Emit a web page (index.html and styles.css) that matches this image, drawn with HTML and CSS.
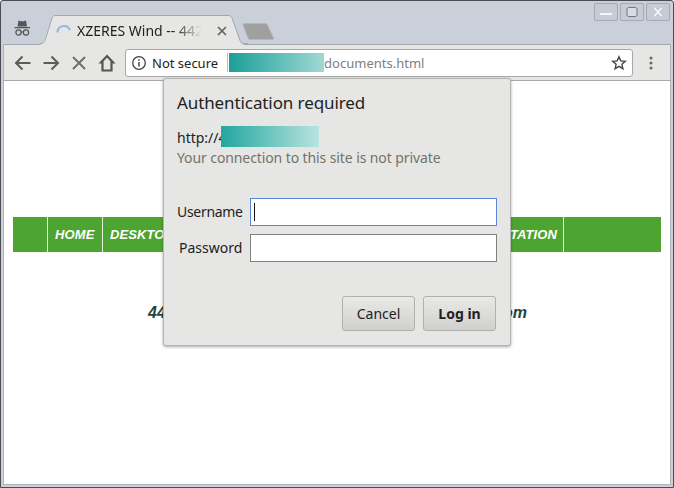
FILE: index.html
```html
<!DOCTYPE html>
<html lang="en">
<head>
<meta charset="utf-8">
<title>XZERES Wind</title>
<link rel="stylesheet" href="styles.css">
</head>
<body>
<div class="window">
  <div class="winbtns">
    <span class="winbtn"><svg width="18" height="14" viewBox="0 0 18 14"><path d="M3 9h12" class="wb"/></svg></span>
    <span class="winbtn"><svg width="18" height="14" viewBox="0 0 18 14"><rect x="4" y="2.500" width="10" height="9" rx="1.500" class="wb-thin"/></svg></span>
    <span class="winbtn"><svg width="18" height="14" viewBox="0 0 18 14"><path d="M5 2.500l8 9M13 2.500l-8 9" class="wb"/></svg></span>
  </div>
  <header class="tabstrip">
    <svg class="incognito" width="18" height="18" viewBox="0 0 18 18">
      <path d="M0.500 8h15.500v1.300H0.500z M3.500 7.500L4.500 1.500l2.300.7h2.900l2.300-.7 1 6z" fill="#555"/>
      <circle cx="4.500" cy="13.500" r="2.600" fill="none" stroke="#555" stroke-width="1.200"/>
      <circle cx="12" cy="13.500" r="2.600" fill="none" stroke="#555" stroke-width="1.200"/>
      <path d="M7 13h2.500" stroke="#555" stroke-width="1.100"/>
    </svg>
    <div class="tab">
      <svg class="tabshape" width="208" height="31" viewBox="0 0 208 31">
        <path d="M0 31V29.500c2 0 3-1 4-3L12 3c.7-1.700 2-2.500 4-2.500h172c2 0 3.300.8 4 2.500l8 23.500c1 2 2 3 4 3V31z" fill="#e6e6e4"/>
        <path d="M0 28.500h1c2 0 3-1 4-3L12 3c.7-1.700 2-2.500 4-2.500h172c2 0 3.300.8 4 2.500l8 22.500c1 2 2 3 4 3h4" fill="none" stroke="#a3a8ad"/>
      </svg>
      <svg class="spinner" width="16" height="16" viewBox="0 0 16 16"><path d="M1.500 9.500A6.500 6.500 0 0 1 14 7" fill="none" stroke="#8fb4e8" stroke-width="2"/></svg>
      <span class="tabtitle">XZERES Wind -- 442</span>
      <svg class="tabclose" width="10" height="10" viewBox="0 0 10 10"><path d="M1 1l8 8M9 1L1 9" stroke="#5f5f5f" stroke-width="1.600"/></svg>
    </div>
    <svg class="newtab" width="36" height="20" viewBox="0 0 36 20"><path d="M2 3c0-1 .5-1.500 1.500-1.500h21c1 0 1.500.4 2 1.500l6 13c.4 1 0 1.500-1 1.500H9c-1 0-1.600-.5-2-1.500z" fill="#a0a0a0" stroke="#b4b8bc"/></svg>
  </header>
  <nav class="toolbar">
    <svg class="tool" width="20" height="20" viewBox="0 0 20 20"><path d="M17.500 10H3M9.500 3.500L3 10l6.500 6.500" class="ti"/></svg>
    <svg class="tool" width="20" height="20" viewBox="0 0 20 20"><path d="M2.500 10H17M10.500 3.500L17 10l-6.500 6.500" class="ti"/></svg>
    <svg class="tool" width="20" height="20" viewBox="0 0 20 20"><path d="M4 4l12 12M16 4L4 16" class="ti ti-light"/></svg>
    <svg class="tool" width="20" height="20" viewBox="0 0 20 20"><path d="M10 3L16 9.500h-1.500v8h-9v-8H4z" class="ti ti-home"/></svg>
    <div class="omnibox">
      <svg class="info" width="16" height="16" viewBox="0 0 16 16"><circle cx="8" cy="8" r="6.300" fill="none" stroke="#444" stroke-width="1.300"/><path d="M8 7v4.500M8 4.300v1.500" stroke="#444" stroke-width="1.500"/></svg>
      <span class="secure">Not secure</span>
      <span class="omnisep"></span>
      <span class="redact-url"></span>
      <span class="urltext">documents.html</span>
      <svg class="star" width="16" height="16" viewBox="0 0 16 16"><path d="M8 1.800l1.800 4.100 4.500.4-3.400 3 1 4.400L8 11.400l-3.900 2.300 1-4.400-3.400-3 4.500-.4z" fill="none" stroke="#444" stroke-width="1.400"/></svg>
    </div>
    <svg class="menu" width="4" height="14" viewBox="0 0 4 14"><circle cx="2" cy="2" r="1.500" fill="#666"/><circle cx="2" cy="7" r="1.500" fill="#666"/><circle cx="2" cy="12" r="1.500" fill="#666"/></svg>
  </nav>
  <main class="content">
    <ul class="mainnav">
      <li class="cell cell-empty"></li>
      <li class="cell cell-home">HOME</li>
      <li class="cell cell-desktop">DESKTOP</li>
      <li class="cell cell-docs">DOCUMENTATION</li>
      <li class="cell-rest"></li>
    </ul>
    <p class="address"><span>44</span><span>om</span></p>
  </main>
  <section class="dialog">
    <h1 class="dlg-title">Authentication required</h1>
    <div class="dlg-origin">http://4<span class="redact-origin"></span></div>
    <div class="dlg-note">Your connection to this site is not private</div>
    <div class="dlg-form">
      <label class="dlg-label">Username</label>
      <div class="dlg-input dlg-input-focus"><span class="caret"></span></div>
      <label class="dlg-label dlg-label-pw">Password</label>
      <div class="dlg-input"></div>
    </div>
    <div class="dlg-buttons">
      <button class="dlg-btn">Cancel</button>
      <button class="dlg-btn dlg-btn-primary">Log in</button>
    </div>
  </section>
</div>
</body>
</html>
```
FILE: styles.css
```css
* { box-sizing: border-box; }
html, body { margin: 0; padding: 0; }
body { width: 674px; height: 488px; overflow: hidden; font-family: "Noto Sans", sans-serif; }
.window {
  position: relative;
  width: 674px;
  height: 488px;
  background: #c9d0da;
  border: 1px solid #4b4d52;
  border-radius: 3px 3px 0 0;
  padding: 0 2px 2px;
  display: flex;
  flex-direction: column;
}
.winbtns { position: absolute; top: 2px; right: 3px; display: flex; gap: 2px; }
.winbtn {
  width: 24px; height: 18px;
  border: 1px solid #a5abb4;
  border-radius: 2px;
  background: #c5ccd6;
  display: flex; align-items: center; justify-content: center;
}
.wb { stroke: #f4f6f8; stroke-width: 2; fill: none; filter: drop-shadow(0 0 .6px #7d838c); }
.wb-thin { stroke: #70767e; stroke-width: 1; fill: #d9dde3; }
.tabstrip { height: 43px; flex: none; display: flex; align-items: flex-end; position: relative; z-index: 1; }
.incognito { position: absolute; left: 11px; top: 18px; }
.tab { position: absolute; left: 37px; top: 14px; width: 208px; height: 31px; display: flex; align-items: center; }
.tabshape { position: absolute; left: 0; top: 0; }
.spinner { position: relative; margin-left: 16px; }
.tabtitle {
  position: relative;
  margin-left: 5px;
  width: 135px;
  overflow: hidden;
  white-space: nowrap;
  font-size: 14px;
  color: #222;
  -webkit-mask-image: linear-gradient(90deg, #000 72%, transparent 92%);
  mask-image: linear-gradient(90deg, #000 72%, transparent 92%);
}
.tabclose { position: relative; margin-left: 5px; }
.newtab { position: absolute; left: 238px; top: 21px; }
.toolbar {
  height: 37px;
  flex: none;
  background: #e6e6e4;
  border-top: 1px solid #a3a8ad;
  border-bottom: 1px solid #a9a9a9;
  border-left: 1px solid #b0b5bb;
  border-right: 1px solid #b0b5bb;
  display: flex;
  align-items: center;
  padding-left: 9px;
  position: relative;
}
.tool { margin-right: 8px; flex: none; }
.ti { fill: none; stroke: #5c5c5c; stroke-width: 2; }
.ti-light { stroke: #707070; }
.ti-home { stroke: #555; stroke-width: 2.200; stroke-linejoin: miter; }
.omnibox {
  width: 508px;
  height: 28px;
  background: #fff;
  border: 1px solid #a8a8a8;
  border-radius: 3px;
  display: flex;
  align-items: center;
  padding-left: 5px;
  flex: none;
}
.info { flex: none; }
.secure { font-size: 13px; color: #222; margin-left: 5px; white-space: nowrap; }
.omnisep { width: 1px; height: 19px; background: #bbb; margin-left: 9px; flex: none; }
.redact-url { width: 95px; height: 19px; background: linear-gradient(90deg, #1a9f98, #a0d8d4); margin-left: 1px; flex: none; }
.urltext { font-size: 13px; color: #808080; }
.star { margin-left: auto; margin-right: 5px; flex: none; }
.menu { margin-left: 16px; flex: none; }
.content {
  flex: 1;
  background: #fff;
  border: 1px solid #b0b5bb;
  border-top: 0;
  padding: 136px 9px 0;
  overflow: hidden;
}
.mainnav { list-style: none; margin: 0; padding: 0; display: flex; height: 35px; background: #4ea431; }
.cell {
  border-right: 1px solid #e4efe0;
  color: #fff;
  font: italic bold 13px "Liberation Sans", sans-serif;
  letter-spacing: .1px;
  line-height: 35px;
  padding-left: 7px;
  flex: none;
  overflow: hidden;
  white-space: nowrap;
}
.cell-empty { width: 35px; }
.cell-home { width: 55px; }
.cell-desktop { width: 130px; }
.cell-docs { width: 331px; text-align: right; padding-right: 6px; }
.cell-rest { flex: 1; }
.address {
  margin: 51px 0 0 135px;
  width: 379px;
  display: flex;
  justify-content: space-between;
  color: #24453a;
  font: italic bold 16px "Liberation Sans", sans-serif;
  line-height: 20px;
  white-space: nowrap;
}
.dialog {
  position: absolute;
  left: 162px;
  top: 77px;
  width: 348px;
  height: 268px;
  background: #e6e6e4;
  border: 1px solid #b4b4b2;
  border-radius: 3px;
  box-shadow: 0 1px 3px rgba(0,0,0,.35);
  padding: 12px 13px 0;
}
.dlg-title { margin: 0; font-size: 17px; letter-spacing: -.1px; font-weight: 400; line-height: 24px; color: #222; }
.dlg-origin { margin-top: 12px; height: 22px; font-size: 14px; line-height: 22px; color: #222; position: relative; white-space: nowrap; }
.redact-origin { position: absolute; left: 44px; top: -1px; width: 98px; height: 21px; background: linear-gradient(90deg, #22a79f, #b9e3df); }
.dlg-note { font-size: 14px; letter-spacing: -.1px; line-height: 18px; color: #73736a; }
.dlg-form { margin-top: 31px; display: grid; grid-template-columns: 73px 247px; row-gap: 8px; }
.dlg-label { font-size: 14px; letter-spacing: -.3px; line-height: 28px; color: #222; }
.dlg-label-pw { padding-left: 2px; letter-spacing: 0; }
.dlg-input { height: 28px; background: #fff; border: 1px solid #808080; padding: 4px 0 0 3px; }
.dlg-input-focus { border-color: #5a87d8; }
.caret { display: block; width: 1px; height: 18px; background: #111; }
.dlg-buttons { margin-top: 34px; display: flex; justify-content: flex-end; gap: 8px; padding-right: 1px; }
.dlg-btn {
  width: 73px; height: 35px;
  border: 1px solid #b0b0ae;
  border-radius: 3px;
  background: linear-gradient(#e9e9e7, #d0d0ce);
  font: 400 14px "Noto Sans", sans-serif;
  color: #222;
  padding: 0;
}
.dlg-btn-primary { font-weight: 700; }
```
